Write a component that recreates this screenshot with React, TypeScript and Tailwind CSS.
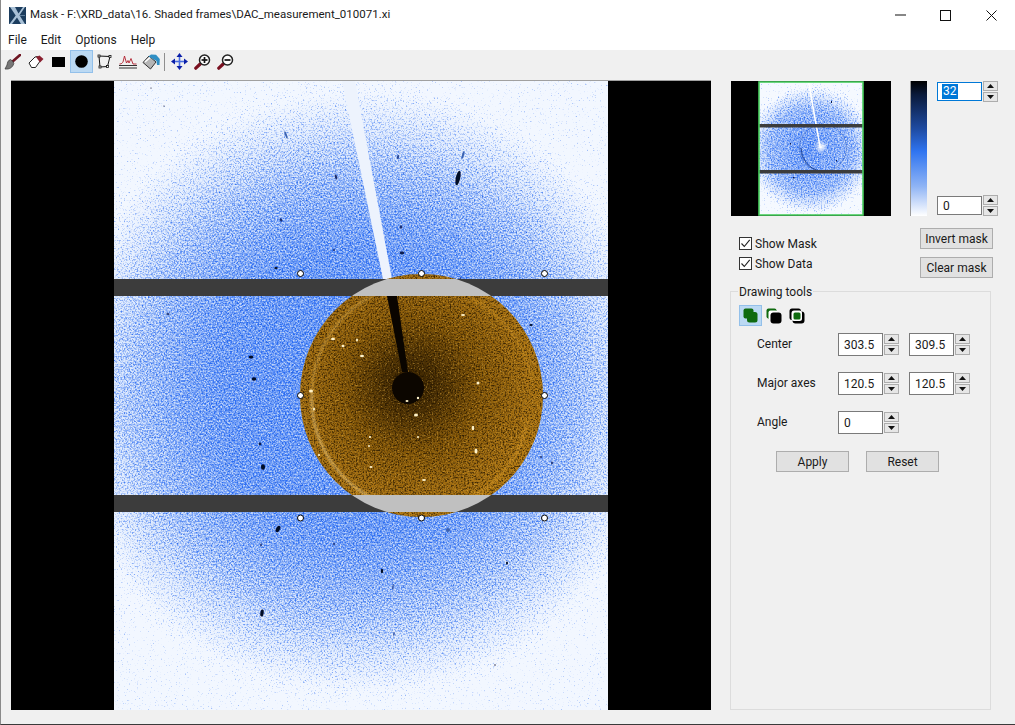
import React from "react";

const font = { fontFamily: 'Roboto, "Noto Sans", sans-serif' };

function Spin({ value, selected, w = "w-[45px]", h = "h-[23px]" }: { value: string; selected?: boolean; w?: string; h?: string }) {
  return (
    <div className="flex items-center">
      <div className={`${w} ${h} bg-white border flex items-center pl-[5px] text-[12px] text-[#1a1a1a] ${selected ? "border-[#0078d7]" : "border-[#7a7a7a]"}`}>
        {selected ? <span className="bg-[#0078d7] text-white leading-[15px] px-[1px] -ml-[1px]">{value}</span> : <span>{value}</span>}
      </div>
      <div className="ml-[1px] flex flex-col gap-[1px]">
        <SpinBtn up />
        <SpinBtn />
      </div>
    </div>
  );
}

function SpinBtn({ up }: { up?: boolean }) {
  return (
    <div className="w-[15px] h-[10px] bg-[#e6e6e6] border border-[#adadad] flex items-center justify-center">
      <svg width="7" height="4" viewBox="0 0 7 4">
        <path d={up ? "M3.5 0 L7 4 L0 4 Z" : "M3.5 4 L7 0 L0 0 Z"} fill="#111" />
      </svg>
    </div>
  );
}

function Btn({ children, className = "" }: { children: React.ReactNode; className?: string }) {
  return (
    <div className={`w-[73px] h-[21px] bg-[#e1e1e1] border border-[#adadad] flex items-center justify-center text-[12px] text-[#1a1a1a] ${className}`}>
      {children}
    </div>
  );
}

function Check({ label }: { label: string }) {
  return (
    <div className="flex items-center h-[13px] gap-[3px] text-[12px] text-[#1a1a1a]">
      <div className="w-[13px] h-[13px] bg-white border border-[#333] flex items-center justify-center">
        <svg width="11" height="11" viewBox="0 0 11 11">
          <path d="M1.5 5.5 L4.3 8.5 L9.7 1.8" fill="none" stroke="#222" strokeWidth="1.1" />
        </svg>
      </div>
      <span>{label}</span>
    </div>
  );
}

const Logo = () => (
  <svg width="17" height="17" viewBox="0 0 17 17">
    <rect width="17" height="17" fill="#1c3d5e" />
    <path d="M1 0 L6 0 L9.5 6.5 L14 0 L16 0 L10.5 8.2 L16 17 L12 17 L8 10.5 L3 17 L0.5 17 L6.7 8.4 Z" fill="#a8c0d6" />
    <path d="M11 8.5 H16" stroke="#5d7d9a" strokeWidth="1" />
  </svg>
);

const Magnifier = ({ plus }: { plus?: boolean }) => (
  <svg width="17" height="16" viewBox="0 0 17 16">
    <path d="M6.2 10 L1.8 14.2" stroke="#7a1020" strokeWidth="3.2" strokeLinecap="round" />
    <circle cx="10.5" cy="6" r="5" fill="#fff" stroke="#222" strokeWidth="1.5" />
    <path d="M7.5 6 H13.5" stroke="#111" strokeWidth="1.7" />
    {plus && <path d="M10.5 3 V9" stroke="#111" strokeWidth="1.7" />}
  </svg>
);

function ToolIcon({ children, active }: { children: React.ReactNode; active?: boolean }) {
  return (
    <div className={`w-[23px] h-[23px] flex items-center justify-center border ${active ? "bg-[#bbd9f3] border-[#93c0ea]" : "border-transparent"}`}>
      {children}
    </div>
  );
}

function Toolbar() {
  return (
    <div className="h-[23px] flex items-center">
      <ToolIcon>
        <svg width="17" height="16" viewBox="0 0 17 16">
          <path d="M16 1 L8 8" stroke="#6e1522" strokeWidth="2.6" strokeLinecap="round" />
          <path d="M9 7.5 L6.5 5.5 C3.5 6.5 3.5 9 3 11 L1 15 C5 15.5 8.5 14 9.8 9.5 Z" fill="#777" stroke="#333" strokeWidth="0.7" />
        </svg>
      </ToolIcon>
      <ToolIcon>
        <svg width="16" height="14" viewBox="0 0 16 14">
          <path d="M1 8 L7 2 L9.5 1.5 L12.5 5.5 L7.5 12.5 L3.5 12.5 Z" fill="#fff" stroke="#222" strokeWidth="1" />
          <path d="M8 2 L11.5 0.5 L15.5 4 L12 7.5 Z" fill="#8a2030" />
        </svg>
      </ToolIcon>
      <ToolIcon>
        <svg width="13" height="10" viewBox="0 0 13 10"><rect width="13" height="10" fill="#000" /></svg>
      </ToolIcon>
      <ToolIcon active>
        <svg width="13" height="13" viewBox="0 0 13 13"><circle cx="6.5" cy="6.5" r="6.3" fill="#000" /></svg>
      </ToolIcon>
      <ToolIcon>
        <svg width="15" height="15" viewBox="0 0 15 15">
          <path d="M2 2 L13 2.5 L10.5 12.5 L3 13 Z" fill="none" stroke="#111" strokeWidth="1" />
          <g fill="#fff" stroke="#111" strokeWidth="0.8">
            <rect x="1" y="1" width="2" height="2" /><rect x="12" y="1.5" width="2" height="2" />
            <rect x="9.5" y="11.5" width="2" height="2" /><rect x="2" y="12" width="2" height="2" />
          </g>
        </svg>
      </ToolIcon>
      <ToolIcon>
        <svg width="18" height="14" viewBox="0 0 18 14">
          <path d="M0.5 9 C3 9 3 8 4 7 L5.5 1 L7.5 8 L9 5.5 L10 8 L12 3.5 L14 9 L17.5 9" fill="none" stroke="#b11e2c" strokeWidth="0.9" />
          <path d="M0 10.5 H18 M0 13 H18" stroke="#333" strokeWidth="1" />
        </svg>
      </ToolIcon>
      <ToolIcon>
        <svg width="18" height="16" viewBox="0 0 18 16">
          <path d="M7 2 L14 8 L8.5 15 L1 8.5 Z" fill="#b5b5b5" stroke="#333" strokeWidth="1" />
          <path d="M3 8 L8 3.5" stroke="#fff" strokeWidth="1.6" />
          <path d="M6.5 2.5 L9 0.5 L14 0.8 L17.8 5 L17.5 11 L15 11 L14.5 7 Z" fill="#2f8fc4" />
        </svg>
      </ToolIcon>
      <div className="w-[1px] h-[18px] bg-[#8f8f8f] ml-[2px] mr-[3px]" />
      <ToolIcon>
        <svg width="17" height="17" viewBox="0 0 17 17" fill="#0a1ea8">
          <path d="M8.5 0 L11.5 4 L5.5 4 Z M8.5 17 L11.5 13 L5.5 13 Z M0 8.5 L4 5.5 L4 11.5 Z M17 8.5 L13 5.5 L13 11.5 Z" />
          <rect x="7.7" y="4" width="1.6" height="9" fill="#4a6de0" />
          <rect x="4" y="7.7" width="9" height="1.6" fill="#4a6de0" />
        </svg>
      </ToolIcon>
      <ToolIcon><Magnifier plus /></ToolIcon>
      <ToolIcon><Magnifier /></ToolIcon>
    </div>
  );
}

const darkSpots: [number, number, number, number, number, string?][] = [
  [458, 178, 2.2, 7.5, 12], [286, 135, 1, 4, -20, "#3a62b0"], [336, 177, 1.2, 2.6, -15, "#1a2f70"], [281, 220, 1.2, 1.8, -30, "#1a2f70"],
  [398, 157, 1.1, 2.2, 10, "#2a4a9a"], [401, 227, 1.3, 1.8, 0, "#1a2f70"], [402, 253, 2.3, 1.4, 0, "#101e50"], [463, 155, 1, 4, 15, "#3a62b0"],
  [251, 357, 2.3, 1.6, 0], [254, 379, 2.3, 1.8, 0], [260, 444, 1.4, 1.4, 0, "#101e50"], [263, 467, 2, 2.8, 0], [168, 314, 1.8, 1, 20, "#1a2f70"],
  [278, 529, 1.9, 3.4, 30], [262, 613, 1.7, 3.6, 8], [382, 571, 1.2, 2.3, 0], [507, 563, 1, 1.5, 0], [261, 545, 0.8, 1.4, 0, "#1a2f70"],
  [393, 587, 0.7, 3, 5, "#2a4a9a"], [394, 634, 0.7, 2, 5, "#2a4a9a"], [334, 544, 0.8, 1.2, 0, "#1a2f70"], [531, 325, 1.6, 1.1, 0], [495, 665, 0.7, 0.7, 0],
  [151, 88, 0.6, 0.6, 0], [164, 106, 0.6, 0.6, 0], [276, 268, 1.8, 1, 0], [552, 463, 0.9, 1.4, 0, "#1a2f70"], [376, 510, 1.6, 1.1, 0],
  [460, 280, 1, 3, 15, "#2a4a9a"], [448, 530, 2, 2, 0, "#3a62b0"], [334, 250, 1, 1, 0, "#1a2f70"], [541, 457, 1, 1, 0, "#1a2f70"],
];

const brightSpots: [number, number, number, number][] = [
  [463, 315, 2, 1], [333, 339, 2, 1.2], [362, 356, 2, 1.2], [357, 340, 1, 1.5], [343, 346, 1.5, 1.2], [478, 383, 1.5, 1.5],
  [416, 415, 2, 1.5], [407, 401, 1.5, 1], [418, 398, 1.2, 1.2], [473, 428, 1.3, 2.2], [476, 451, 1.5, 2.5], [370, 437, 1.2, 1],
  [369, 446, 1, 1], [418, 437, 1, 1], [371, 467, 1.5, 1], [424, 480, 2, 1], [319, 455, 1.2, 1], [311, 391, 2, 1.5], [314, 409, 1, 1.5],
];

function DataImage() {
  return (
    <svg width="700" height="629" viewBox="11 81 700 629" className="block shrink-0">
      <defs>
        <radialGradient id="under" gradientUnits="userSpaceOnUse" cx="360" cy="392" r="300">
          <stop offset="0" stopColor="#8fb4f7" stopOpacity="0.5" />
          <stop offset="0.6" stopColor="#8fb4f7" stopOpacity="0.42" />
          <stop offset="0.85" stopColor="#a8c6f9" stopOpacity="0.2" />
          <stop offset="1" stopColor="#a8c6f9" stopOpacity="0" />
        </radialGradient>
        <radialGradient id="field" gradientUnits="userSpaceOnUse" cx="360" cy="392" r="315">
          <stop offset="0" stopColor="#000" stopOpacity="1" />
          <stop offset="0.45" stopColor="#000" stopOpacity="0.92" />
          <stop offset="0.72" stopColor="#000" stopOpacity="0.62" />
          <stop offset="0.88" stopColor="#000" stopOpacity="0.3" />
          <stop offset="1" stopColor="#000" stopOpacity="0" />
        </radialGradient>
        <radialGradient id="dark" gradientUnits="userSpaceOnUse" cx="360" cy="392" r="300">
          <stop offset="0" stopColor="#2455c0" stopOpacity="0.5" />
          <stop offset="0.75" stopColor="#2455c0" stopOpacity="0.35" />
          <stop offset="1" stopColor="#2455c0" stopOpacity="0" />
        </radialGradient>
        <radialGradient id="gold" gradientUnits="userSpaceOnUse" cx="412" cy="385" r="135">
          <stop offset="0" stopColor="#3a2400" />
          <stop offset="0.18" stopColor="#4c3104" />
          <stop offset="0.5" stopColor="#8a5c0a" />
          <stop offset="0.85" stopColor="#aa7414" />
          <stop offset="1" stopColor="#b57c14" />
        </radialGradient>
        <filter id="speck" x="0" y="0" width="100%" height="100%" colorInterpolationFilters="sRGB">
          <feTurbulence type="fractalNoise" baseFrequency="0.62" numOctaves="2" seed="7" result="n" />
          <feColorMatrix in="n" type="matrix" values="0 0 0 0 0  0 0 0 0 0  0 0 0 0 0  1 0 0 0 0" result="a" />
          <feComposite in="SourceGraphic" in2="a" operator="arithmetic" k1="0" k2="0.95" k3="2.1" k4="-1.38" result="m" />
          <feFlood floodColor="#2a6cf2" floodOpacity="1" />
          <feComposite in2="m" operator="in" />
        </filter>
        <filter id="speckDark" x="0" y="0" width="100%" height="100%" colorInterpolationFilters="sRGB">
          <feTurbulence type="fractalNoise" baseFrequency="0.62" numOctaves="2" seed="21" result="n" />
          <feColorMatrix in="n" type="matrix" values="0 0 0 0 0  0 0 0 0 0  0 0 0 0 0  6 0 0 0 -3.7" result="a" />
          <feComposite in="SourceGraphic" in2="a" operator="in" />
        </filter>
        <filter id="speckGold" x="0" y="0" width="100%" height="100%" colorInterpolationFilters="sRGB">
          <feTurbulence type="fractalNoise" baseFrequency="0.62" numOctaves="2" seed="11" result="n" />
          <feColorMatrix in="n" type="matrix" values="0 0 0 0 0  0 0 0 0 0  0 0 0 0 0  3 0 0 0 -1.3" result="a" />
          <feComposite in="SourceGraphic" in2="a" operator="in" />
        </filter>
        <filter id="speckLight" x="0" y="0" width="100%" height="100%" colorInterpolationFilters="sRGB">
          <feTurbulence type="fractalNoise" baseFrequency="0.62" numOctaves="2" seed="33" result="n" />
          <feColorMatrix in="n" type="matrix" values="0 0 0 0 0  0 0 0 0 0  0 0 0 0 0  5 0 0 0 -2.9" result="a" />
          <feComposite in="SourceGraphic" in2="a" operator="in" />
        </filter>
        <filter id="soft"><feGaussianBlur stdDeviation="1" /></filter>
        <filter id="spot"><feGaussianBlur stdDeviation="0.45" /></filter>
        <clipPath id="disc"><circle cx="421.5" cy="395.5" r="121.5" /></clipPath>
        <clipPath id="data"><rect x="114" y="81" width="494" height="629" /></clipPath>
      </defs>
      <rect x="11" y="81" width="700" height="629" fill="#000" />
      <rect x="114" y="81" width="494" height="629" fill="#f2f7ff" />
      <g clipPath="url(#data)">
        <rect x="114" y="81" width="494" height="629" fill="url(#under)" />
        <rect x="114" y="81" width="494" height="629" fill="url(#field)" filter="url(#speck)" />
        <rect x="114" y="81" width="494" height="629" fill="url(#dark)" filter="url(#speckDark)" />
        <path d="M342 81 L355 81 L392 279 L383 279 Z" fill="#edf3fd" />
        <g filter="url(#spot)">
          {darkSpots.map(([x, y, rx, ry, rot, c], i) => (
            <ellipse key={i} cx={x} cy={y} rx={rx} ry={ry} fill={c ?? "#050a28"} transform={`rotate(${rot} ${x} ${y})`} />
          ))}
        </g>
      </g>
      <circle cx="421.5" cy="395.5" r="121.5" fill="url(#gold)" />
      <g clipPath="url(#disc)">
        <rect x="300" y="274" width="243" height="243" fill="#1c1000" filter="url(#speckGold)" opacity="0.75" />
        <rect x="300" y="274" width="243" height="243" fill="#e8b448" filter="url(#speckLight)" opacity="0.45" />
        <path d="M312 392 A112 112 0 0 1 372 296" fill="none" stroke="#f0c060" strokeOpacity="0.45" strokeWidth="2.2" filter="url(#soft)" />
        <path d="M312 392 A112 112 0 0 0 372 498 A112 112 0 0 0 415 507" fill="none" stroke="#ffdc90" strokeOpacity="0.55" strokeWidth="2.4" filter="url(#soft)" />
        <path d="M470 498 A112 112 0 0 0 528 420" fill="none" stroke="#e8a830" strokeOpacity="0.45" strokeWidth="2" filter="url(#soft)" />
        <path d="M470 298 A112 112 0 0 1 532 380" fill="none" stroke="#e8a830" strokeOpacity="0.35" strokeWidth="2" filter="url(#soft)" />
        <path d="M387 296 L397 296 L408 372 L402 372 Z" fill="#0a0500" />
        <circle cx="408" cy="388" r="16" fill="#0c0600" />
        <g filter="url(#spot)">
          {brightSpots.map(([x, y, rx, ry], i) => (
            <ellipse key={i} cx={x} cy={y} rx={rx} ry={ry} fill="#fff2c8" />
          ))}
        </g>
      </g>
      <rect x="114" y="279" width="494" height="17" fill="#3c3c3c" />
      <rect x="114" y="495" width="494" height="17" fill="#3c3c3c" />
      <g clipPath="url(#disc)">
        <rect x="300" y="279" width="243" height="17" fill="#c0c0c0" />
        <rect x="300" y="495" width="243" height="17" fill="#c0c0c0" />
      </g>
      <g fill="#fff" stroke="#000" strokeWidth="1">
        {[273.5, 395.5, 518].map((y) =>
          [300.5, 421.5, 544.5].map((x) =>
            x === 421.5 && y === 395.5 ? null : <circle key={`${x}-${y}`} cx={x} cy={y} r="3" />
          )
        )}
      </g>
    </svg>
  );
}

function Preview() {
  return (
    <svg width="160" height="135" viewBox="731 81 160 135" className="block">
      <defs>
        <radialGradient id="mfield" gradientUnits="userSpaceOnUse" cx="811" cy="150" r="68">
          <stop offset="0" stopColor="#000" stopOpacity="1" />
          <stop offset="0.6" stopColor="#000" stopOpacity="0.75" />
          <stop offset="0.85" stopColor="#000" stopOpacity="0.35" />
          <stop offset="1" stopColor="#000" stopOpacity="0" />
        </radialGradient>
        <radialGradient id="munder" gradientUnits="userSpaceOnUse" cx="811" cy="150" r="62">
          <stop offset="0" stopColor="#8db2f7" stopOpacity="0.55" />
          <stop offset="0.7" stopColor="#8db2f7" stopOpacity="0.4" />
          <stop offset="1" stopColor="#8db2f7" stopOpacity="0" />
        </radialGradient>
        <filter id="mspeck" x="0" y="0" width="100%" height="100%" colorInterpolationFilters="sRGB">
          <feTurbulence type="fractalNoise" baseFrequency="0.7" numOctaves="2" seed="3" result="n" />
          <feColorMatrix in="n" type="matrix" values="0 0 0 0 0  0 0 0 0 0  0 0 0 0 0  1 0 0 0 0" result="a" />
          <feComposite in="SourceGraphic" in2="a" operator="arithmetic" k1="0" k2="0.9" k3="2" k4="-1.35" result="m" />
          <feFlood floodColor="#2a6cf2" floodOpacity="1" />
          <feComposite in2="m" operator="in" />
        </filter>
        <radialGradient id="mc"><stop offset="0" stopColor="#fff" /><stop offset="1" stopColor="#fff" stopOpacity="0" /></radialGradient>
      </defs>
      <rect x="731" y="81" width="160" height="135" fill="#000" />
      <rect x="759" y="82" width="104" height="133" fill="#f5f9ff" />
      <rect x="759" y="82" width="104" height="133" fill="url(#munder)" />
      <rect x="759" y="82" width="104" height="133" fill="url(#mfield)" filter="url(#mspeck)" />
      <circle cx="823" cy="148" r="23.5" fill="none" stroke="#3a62b8" strokeWidth="0.8" strokeOpacity="0.6" />
      <path d="M801 148 A23.5 23.5 0 0 0 820 171" fill="none" stroke="#1f4496" strokeWidth="1" />
      <circle cx="821" cy="147" r="7" fill="url(#mc)" />
      <path d="M807.8 83 L809.6 83 L821 148 L819.5 148 Z" fill="#fff" />
      <g fill="#0a1a50">
        <rect x="831" y="101" width="1" height="2" /><rect x="790" y="143" width="1" height="1.5" /><rect x="836" y="160" width="1" height="1.5" />
        <rect x="793" y="177" width="1.5" height="1.5" />
      </g>
      <rect x="759" y="124" width="104" height="3.5" fill="#3c3c3c" />
      <rect x="759" y="170" width="104" height="3.5" fill="#3c3c3c" />
      <rect x="759" y="82" width="104" height="133" fill="none" stroke="#49cf5e" strokeWidth="1.6" />
    </svg>
  );
}

export default function App() {
  return (
    <div style={font} className="w-[1015px] h-[725px] bg-[#f0f0f0] flex flex-col overflow-hidden border-b border-l border-[#3a3a3a] border-l-[#8a8a8a] text-[#1a1a1a]">
      <div className="h-[30px] bg-white flex items-center shrink-0 pl-[8px] relative">
        <Logo />
        <span className="ml-[4px] text-[11.5px] whitespace-nowrap">Mask - F:\XRD_data\16. Shaded frames\DAC_measurement_010071.xi</span>
        <div className="ml-auto flex items-center pr-[18px]">
          <svg width="11" height="2" viewBox="0 0 11 2" className="mr-[34px]"><rect width="11" height="1" y="0.5" fill="#111" /></svg>
          <svg width="11" height="11" viewBox="0 0 11 11" className="mr-[35px]"><rect x="0.5" y="0.5" width="10" height="10" fill="none" stroke="#111" /></svg>
          <svg width="11" height="11" viewBox="0 0 11 11"><path d="M0.5 0.5 L10.5 10.5 M10.5 0.5 L0.5 10.5" stroke="#111" strokeWidth="1" /></svg>
        </div>
      </div>
      <div className="h-[20px] bg-white flex items-center shrink-0 pl-[7px] gap-[14px] text-[12px]">
        <span>File</span><span>Edit</span><span>Options</span><span>Help</span>
      </div>
      <Toolbar />
      <div className="flex pl-[10px] pt-[7px] flex-1 min-h-0">
        <div className="border-t border-[#a0a0a0] h-fit">
          <DataImage />
        </div>
        <div className="ml-[19px] w-[270px] pt-[1px] flex flex-col">
          <div className="flex items-stretch h-[135px] pl-[1px]">
            <Preview />
            <div className="ml-[19px] w-[17px] border-l border-[#9a9a9a] bg-[linear-gradient(to_bottom,#000_0%,#0a1a3a_10%,#1e4aa0_35%,#2f74f0_52%,#8fb4f5_78%,#ffffff_100%)]" />
            <div className="ml-[10px] flex flex-col justify-between">
              <Spin value="32" selected h="h-[19px]" />
              <Spin value="0" h="h-[19px]" />
            </div>
          </div>
          <div className="flex mt-[12px] h-[50px]">
            <div className="pl-[9px] pt-[9px] flex flex-col gap-[7px]">
              <Check label="Show Mask" />
              <Check label="Show Data" />
            </div>
            <div className="ml-auto mr-[7px] flex flex-col gap-[8px]">
              <Btn>Invert mask</Btn>
              <Btn>Clear mask</Btn>
            </div>
          </div>
          <div className="relative mt-[13px] w-[261px] h-[419px] border border-[#dcdcdc] pl-[8px] pt-[13px]">
            <span className="absolute left-[7px] -top-[9px] bg-[#f0f0f0] px-[1px] text-[12px]">Drawing tools</span>
            <div className="flex items-center gap-[1px]">
              <div className="w-[23px] h-[21px] bg-[#bbd9f3] border border-[#93c0ea] flex items-center justify-center">
                <svg width="15" height="15" viewBox="0 0 15 15">
                  <rect x="0.5" y="0.5" width="10" height="10" rx="2" fill="#0f6a0f" />
                  <rect x="4" y="4" width="10.5" height="10.5" rx="2.5" fill="#0f6a0f" />
                </svg>
              </div>
              <div className="w-[22px] h-[21px] flex items-center justify-center">
                <svg width="16" height="16" viewBox="0 0 16 16">
                  <rect x="0.5" y="0.5" width="10" height="10" rx="2" fill="#0f6a0f" />
                  <rect x="2.5" y="2.5" width="9" height="9" rx="2" fill="#fff" />
                  <rect x="4.5" y="4.5" width="11" height="11" rx="3" fill="#000" />
                </svg>
              </div>
              <div className="w-[22px] h-[21px] flex items-center justify-center">
                <svg width="16" height="16" viewBox="0 0 16 16">
                  <rect x="0.5" y="0.5" width="11.5" height="11.5" rx="2.5" fill="#000" />
                  <rect x="3.5" y="3.5" width="12" height="12" rx="3" fill="#000" />
                  <rect x="2.5" y="2.5" width="10.5" height="10.5" rx="2.5" fill="#fff" />
                  <rect x="4.5" y="4.5" width="7" height="7" rx="1.5" fill="#0f6a0f" />
                </svg>
              </div>
            </div>
            <div className="mt-[7px] flex flex-col gap-[16px] pl-[18px]">
              <div className="flex items-center text-[12px]">
                <span className="w-[81px] pb-[2px]">Center</span>
                <Spin value="303.5" />
                <div className="ml-[10px]"><Spin value="309.5" /></div>
              </div>
              <div className="flex items-center text-[12px]">
                <span className="w-[81px] pb-[2px]">Major axes</span>
                <Spin value="120.5" />
                <div className="ml-[10px]"><Spin value="120.5" /></div>
              </div>
              <div className="flex items-center text-[12px]">
                <span className="w-[81px] pb-[2px]">Angle</span>
                <Spin value="0" />
              </div>
            </div>
            <div className="mt-[17px] pl-[37px] flex gap-[17px]">
              <Btn>Apply</Btn>
              <Btn>Reset</Btn>
            </div>
          </div>
        </div>
      </div>
    </div>
  );
}
